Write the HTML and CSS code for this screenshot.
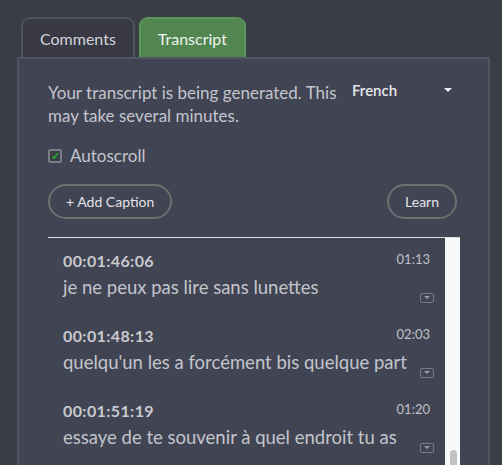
FILE: index.html
```html
<!DOCTYPE html>
<html lang="en">
<head>
  <meta charset="UTF-8" />
  <title>Transcript</title>
  <link rel="stylesheet" href="styles.css">
</head>
<body>
  <div class="tabs">
    <div class="tab">Comments</div>
    <div class="tab active">Transcript</div>
  </div>

  <div class="panel">
    <div class="intro">
      <p class="status">Your transcript is being generated. This may take several minutes.</p>
      <div class="lang">
        <span>French</span>
        <span class="caret"></span>
      </div>
    </div>

    <label class="autoscroll">
      <span class="check">&#10003;</span>
      Autoscroll
    </label>

    <div class="actions">
      <button class="pill">+ Add Caption</button>
      <button class="pill">Learn</button>
    </div>

    <div class="list">
      <div class="entries">
        <div class="entry">
          <div class="entry-head">
            <span class="time">00:01:46:06</span>
            <span class="dur">01:13</span>
          </div>
          <div class="entry-body">
            <span>je ne peux pas lire sans lunettes</span>
            <span class="more"></span>
          </div>
        </div>
        <div class="entry">
          <div class="entry-head">
            <span class="time">00:01:48:13</span>
            <span class="dur">02:03</span>
          </div>
          <div class="entry-body">
            <span>quelqu'un les a forcément bis quelque part</span>
            <span class="more"></span>
          </div>
        </div>
        <div class="entry">
          <div class="entry-head">
            <span class="time">00:01:51:19</span>
            <span class="dur">01:20</span>
          </div>
          <div class="entry-body">
            <span>essaye de te souvenir à quel endroit tu as</span>
            <span class="more"></span>
          </div>
        </div>
      </div>
      <div class="scrollbar"><div class="thumb"></div></div>
    </div>
  </div>
</body>
</html>
```

FILE: styles.css
```css
body {
  margin: 0;
  padding: 17px 0 0 17px;
  background-color: #3a3c46;
  font-family: 'Lato', sans-serif;
  color: #c3c5cc;
  overflow: hidden;
}
.tabs {
  display: flex;
  gap: 4px;
  margin-left: 4px;
}
.tab {
  height: 40px;
  box-sizing: border-box;
  padding: 0 17px;
  line-height: 40px;
  font-size: 16px;
  color: #d2d3d8;
  background-color: #383944;
  border: 2px solid #4f515c;
  border-bottom: none;
  border-radius: 9px 9px 0 0;
}
.tab.active {
  background-color: #518651;
  border-color: #5c955c;
  color: #eef3ee;
}
.panel {
  width: 473px;
  height: 420px;
  box-sizing: border-box;
  background-color: #414453;
  border: 2px solid #52555f;
  border-bottom: none;
  padding: 22px 0 0 29px;
}
.intro {
  display: flex;
  align-items: flex-start;
}
.status {
  margin: 0;
  width: 300px;
  font-size: 17px;
  line-height: 23px;
  color: #c3c5cc;
}
.lang {
  display: flex;
  justify-content: space-between;
  align-items: center;
  width: 100px;
  margin-left: 4px;
  font-size: 15px;
  font-weight: 600;
  color: #e6e7eb;
}
.caret {
  width: 0;
  height: 0;
  border-left: 4px solid transparent;
  border-right: 4px solid transparent;
  border-top: 4px solid #f2f2f2;
}
.autoscroll {
  display: flex;
  align-items: center;
  gap: 8px;
  margin-top: 18px;
  font-size: 17px;
}
.check {
  width: 10px;
  height: 10px;
  border: 2px solid #7a7c84;
  border-radius: 2px;
  background-color: #3a3c46;
  color: #1fae2a;
  font-size: 11px;
  font-weight: bold;
  line-height: 10px;
  text-align: center;
}
.actions {
  display: flex;
  justify-content: space-between;
  width: 409px;
  margin-top: 18px;
}
.pill {
  height: 35px;
  padding: 0 16px;
  border: 2px solid #6f6f70;
  border-radius: 18px;
  background: transparent;
  color: #e2e3e6;
  font-family: 'Lato', sans-serif;
  font-size: 14px;
}
.list {
  display: flex;
  width: 412px;
  height: 240px;
  margin-top: 18px;
  border-top: 1px solid #dcdcdc;
}
.entries {
  flex: 1;
  padding: 13px 11px 0 15px;
}
.entry {
  height: 75px;
}
.entry-head {
  display: flex;
  justify-content: space-between;
  align-items: baseline;
  line-height: 20px;
}
.time {
  font-size: 16px;
  font-weight: bold;
  letter-spacing: 0.4px;
  color: #c9cacd;
}
.dur {
  margin-right: 4px;
  font-size: 13px;
  color: #bfc1c7;
  position: relative;
  top: -3px;
}
.entry-body {
  display: flex;
  justify-content: space-between;
  align-items: flex-end;
  font-size: 18.5px;
  line-height: 24px;
  margin-top: 3px;
}
.more {
  position: relative;
  top: 4px;
  width: 12px;
  height: 8px;
  border: 1px solid #797b86;
  border-radius: 2px;
}
.more::after {
  content: "";
  position: absolute;
  left: 3px;
  top: 2px;
  border-left: 3px solid transparent;
  border-right: 3px solid transparent;
  border-top: 3px solid #9a9ca4;
}
.scrollbar {
  width: 15px;
  background-color: #f9f9f9;
  padding-top: 212px;
  box-sizing: border-box;
}
.thumb {
  width: 7px;
  height: 40px;
  margin-left: 5px;
  border-radius: 4px;
  background-color: #c1c1c1;
}
```
